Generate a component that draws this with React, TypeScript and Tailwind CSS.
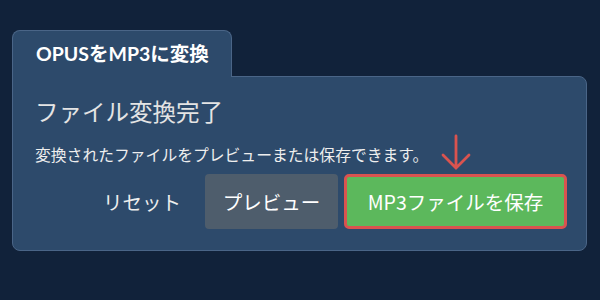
import React from "react";

export default function App() {
  const font = { fontFamily: 'Lato, "Noto Sans CJK JP", sans-serif' };
  const jp = { fontFamily: '"Noto Sans CJK JP", sans-serif' };
  return (
    <div className="w-[600px] h-[300px] bg-[#11223a] overflow-hidden" style={font}>
      <div className="pt-[30px] pl-[12px]">
        <div className="relative z-10 -mb-px w-[220px] h-[47px] bg-[#2d4a6b] border border-b-0 border-[#4a6587] rounded-t-[8px] pl-[23px] pt-[11px]">
          <span className="text-[19.5px] font-bold text-white leading-[24px]">OPUSをMP3に変換</span>
        </div>
        <div className="w-[575px] h-[175px] bg-[#2d4a6b] border border-[#4a6587] rounded-[8px] rounded-tl-none pl-[22px] pr-[19px] pt-[19px]">
          <div className="text-[23.5px] leading-[30px] text-[#e4e4e4] font-normal" style={jp}>
            ファイル変換完了
          </div>
          <div className="mt-[19px] text-[15.8px] leading-[20px] text-[#eeeeee] whitespace-nowrap" style={jp}>
            変換されたファイルをプレビューまたは保存できます。
          </div>
          <div className="mt-[9px] flex items-center justify-end gap-[6px]" style={jp}>
            <button className="h-[55px] pl-[18px] pr-[18px] text-[19.5px] text-[#eeeeee]">リセット</button>
            <button className="h-[55px] w-[133px] rounded-[4px] bg-[#4e5d6c] text-[19.5px] text-white">プレビュー</button>
            <div className="relative">
              <svg className="absolute left-1/2 -translate-x-1/2 -top-[40px]" width="30" height="38" viewBox="0 0 30 38">
                <path d="M15 2 V34 M2 21 L15 34 L28 21" stroke="#d9534f" strokeWidth="2.8" fill="none" strokeLinecap="round" strokeLinejoin="miter" />
              </svg>
              <button className="h-[55px] w-[223px] rounded-[5px] border-[3px] border-[#d9534f] bg-[#5cb85c] text-[19.5px] text-white">
                MP3ファイルを保存
              </button>
            </div>
          </div>
        </div>
      </div>
    </div>
  );
}
